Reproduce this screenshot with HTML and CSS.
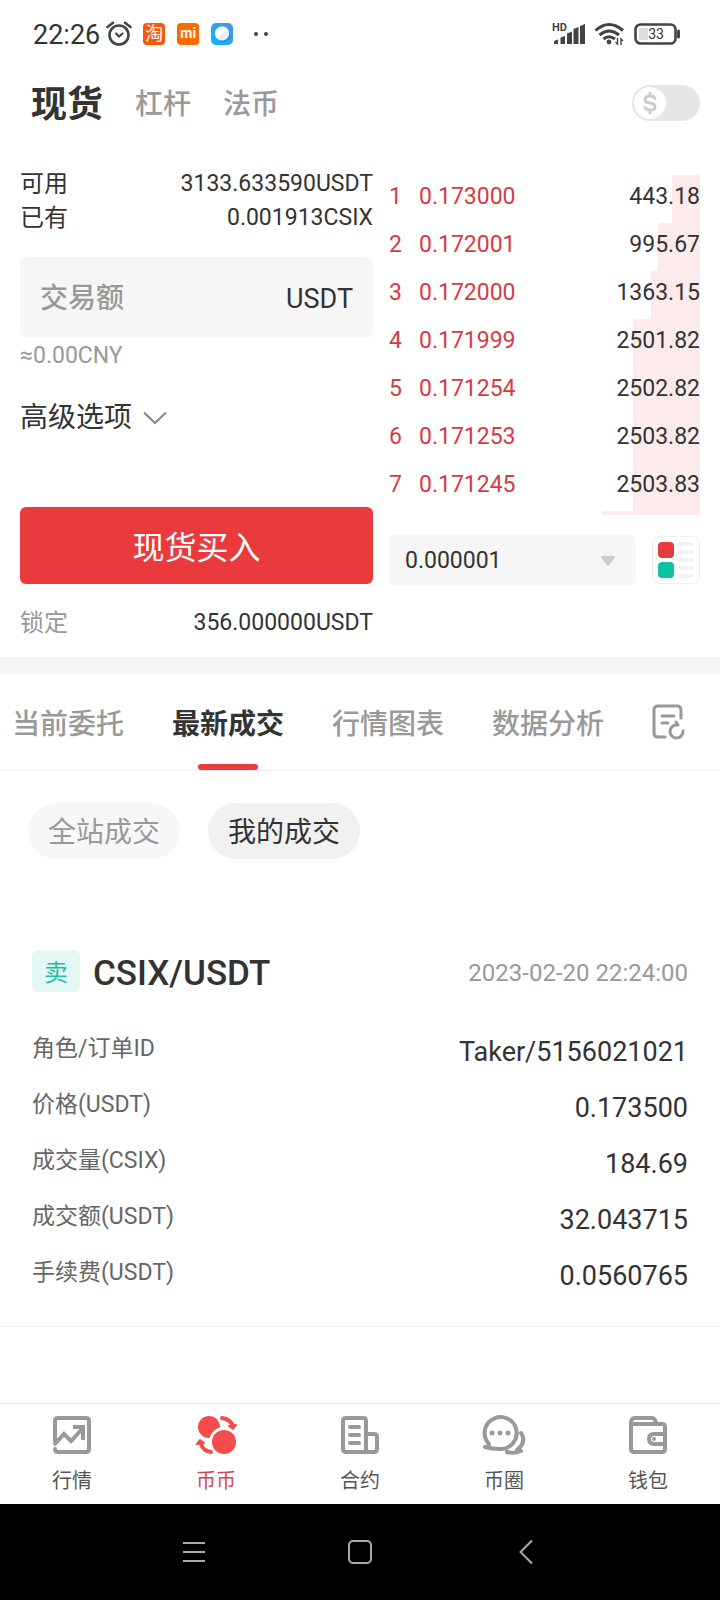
FILE: index.html
```html
<!DOCTYPE html>
<html lang="zh-CN">
<head>
    <meta charset="UTF-8">
    <meta name="viewport" content="width=device-width, initial-scale=1.0">
    <title>现货交易 CSIX/USDT</title>
    <link rel="stylesheet" href="styles.css">
</head>
<body>
    <div class="status-bar">
        <span class="clock">22:26</span>
        <svg class="alarm" width="26" height="26" viewBox="0 0 26 26" fill="none" stroke="#444" stroke-linecap="round">
            <circle cx="13" cy="14" r="9.5" stroke-width="2.6"/>
            <path d="M1.5 6 L7 1.8 M24.5 6 L19 1.8" stroke-width="2.6"/>
            <path d="M10 12.5 L13 15.5 L16.5 12.5" stroke-width="2.2"/>
        </svg>
        <div class="app-icons">
            <span class="app-icon taobao">淘</span>
            <span class="app-icon mi">mi</span>
            <svg width="22" height="22" viewBox="0 0 22 22">
                <defs>
                    <linearGradient id="sky" x1="0" y1="1" x2="1" y2="0">
                        <stop offset="0" stop-color="#12b4f5"/>
                        <stop offset="1" stop-color="#4a90f0"/>
                    </linearGradient>
                </defs>
                <rect width="22" height="22" rx="5" fill="url(#sky)"/>
                <path d="M8 19 L19 9 L19 14 Q16 19 11 19 Z" fill="#0a8de8"/>
                <circle cx="11" cy="10.5" r="7.2" fill="#e8f4fa"/>
                <path d="M6 15.5 A7.2 7.2 0 0 1 16.5 6 Z" fill="#fff"/>
            </svg>
        </div>
        <svg width="16" height="6" viewBox="0 0 16 6" fill="#444">
            <circle cx="3" cy="3" r="2"/>
            <circle cx="13" cy="3" r="2"/>
        </svg>
        <div class="status-right">
            <svg width="34" height="24" viewBox="0 0 34 24" fill="#444">
                <text x="0" y="9" class="hd">HD</text>
                <path d="M2 22 V19.5 Q3 18 6 17.5 V22 Z M8.500 22 V15.5 L13 14 V22 Z M15 22 V11.5 L20 9.5 V22 Z M21.500 22 V7 L26.500 5 V22 Z M28 22 V4 L33 2 V22 Z"/>
            </svg>
            <svg width="32" height="24" viewBox="0 0 32 24" fill="none" stroke="#444" stroke-width="3">
                <path d="M1.5 8.5 Q15 -3.5 29 8.5 M5.5 13 Q15 5 25 13 M9.5 17 Q15 12.5 21 17"/>
                <circle cx="15" cy="20" r="2.4" fill="#444" stroke="none"/>
                <path d="M23.5 16 V22 L21.5 20 M27 23 V17 L29 19" stroke-width="1.4"/>
            </svg>
            <svg width="48" height="22" viewBox="0 0 48 22">
                <rect x="1.5" y="1.5" width="40" height="19" rx="5" fill="#fff" stroke="#444" stroke-width="2.6"/>
                <path d="M5 5 H14 V17 H5 Z" fill="#dcdcdc"/>
                <path d="M44.5 8 V14" stroke="#444" stroke-width="3" stroke-linecap="round"/>
                <text x="22" y="16" text-anchor="middle" class="battery-level">33</text>
            </svg>
        </div>
    </div>

    <header class="market-header">
        <nav class="market-tabs">
            <a href="#spot" class="active">现货</a>
            <a href="#margin">杠杆</a>
            <a href="#fiat">法币</a>
        </nav>
        <label class="currency-switch">
            <input type="checkbox" aria-label="显示法币价格">
            <span class="knob">
                <svg width="14" height="24" viewBox="0 0 14 24" fill="none" stroke="#ccc" stroke-width="3" stroke-linecap="round">
                    <path d="M12 7.5 Q11 5 7 5 Q2 5 2 8.5 Q2 11.5 7 12 Q12 12.5 12 16 Q12 19 7 19 Q3 19 2 16.5 M7 2 V4 M7 20 V22"/>
                </svg>
            </span>
        </label>
    </header>

    <main>
        <section class="trade">
            <form class="order-form">
                <div class="balance"><span>可用</span><span>3133.633590USDT</span></div>
                <div class="balance"><span>已有</span><span>0.001913CSIX</span></div>
                <label class="amount">
                    <input type="text" placeholder="交易额" aria-label="交易额">
                    <span>USDT</span>
                </label>
                <div class="approx">≈0.00CNY</div>
                <button type="button" class="advanced">
                    高级选项
                    <svg width="24" height="14" viewBox="0 0 24 14" fill="none" stroke="#888" stroke-width="2">
                        <path d="M1 1.5 L12 12 L23 1.5"/>
                    </svg>
                </button>
                <button type="button" class="buy">现货买入</button>
                <div class="balance locked"><span>锁定</span><span>356.000000USDT</span></div>
            </form>

            <div class="book">
                <table class="asks">
                    <tbody>
                        <tr style="--depth: 9%"><td>1</td><td>0.173000</td><td>443.18</td></tr>
                        <tr style="--depth: 13.5%"><td>2</td><td>0.172001</td><td>995.67</td></tr>
                        <tr style="--depth: 15.8%"><td>3</td><td>0.172000</td><td>1363.15</td></tr>
                        <tr style="--depth: 21.5%"><td>4</td><td>0.171999</td><td>2501.82</td></tr>
                        <tr style="--depth: 21.5%"><td>5</td><td>0.171254</td><td>2502.82</td></tr>
                        <tr style="--depth: 21.5%"><td>6</td><td>0.171253</td><td>2503.82</td></tr>
                        <tr style="--depth: 21.5%"><td>7</td><td>0.171245</td><td>2503.83</td></tr>
                    </tbody>
                </table>
                <div class="next-depth" style="--depth: 31.5%"></div>
                <div class="book-tools">
                    <div class="precision">
                        <select aria-label="价格精度">
                            <option>0.000001</option>
                        </select>
                        <svg width="16" height="12" viewBox="0 0 16 12" fill="#ccc" stroke="#ccc" stroke-width="2" stroke-linejoin="round">
                            <path d="M2 2 H14 L8 10 Z"/>
                        </svg>
                    </div>
                    <button type="button" class="layout-button" aria-label="盘口布局">
                        <svg width="46" height="46" viewBox="0 0 46 46">
                            <rect x="5" y="5" width="16" height="16" rx="4" fill="#e93b3d"/>
                            <rect x="5" y="25" width="16" height="16" rx="4" fill="#10c0a0"/>
                            <path d="M27 7 H39 M27 15 H39 M27 23 H39 M27 31 H39 M27 39 H39" stroke="#f2f2f2" stroke-width="4" stroke-linecap="round"/>
                        </svg>
                    </button>
                </div>
            </div>
        </section>

        <nav class="section-tabs">
            <a href="#orders">当前委托</a>
            <a href="#deals" class="active">最新成交</a>
            <a href="#chart">行情图表</a>
            <a href="#data">数据分析</a>
            <button type="button" aria-label="历史记录">
                <svg width="34" height="36" viewBox="0 0 34 36" fill="none" stroke="#999" stroke-width="3" stroke-linecap="round" stroke-linejoin="round">
                    <path d="M13 33 H6 Q2 33 2 29 V6 Q2 2 6 2 H25 Q29 2 29 6 V14"/>
                    <path d="M10 12 H22 M10 19 H16"/>
                    <path d="M24 18 L26 21 H24 A6.5 6.5 0 1 0 31 27"/>
                </svg>
            </button>
        </nav>

        <div class="filters">
            <button type="button">全站成交</button>
            <button type="button" class="active">我的成交</button>
        </div>

        <article class="deal">
            <div class="deal-head">
                <span class="side">卖</span>
                <h2>CSIX/USDT</h2>
                <time datetime="2023-02-20T22:24:00">2023-02-20 22:24:00</time>
            </div>
            <dl>
                <div><dt>角色/订单ID</dt><dd>Taker/5156021021</dd></div>
                <div><dt>价格(USDT)</dt><dd>0.173500</dd></div>
                <div><dt>成交量(CSIX)</dt><dd>184.69</dd></div>
                <div><dt>成交额(USDT)</dt><dd>32.043715</dd></div>
                <div><dt>手续费(USDT)</dt><dd>0.0560765</dd></div>
            </dl>
        </article>
    </main>

    <nav class="bottom-nav">
        <a href="#market">
            <svg width="46" height="42" viewBox="0 0 46 42" fill="none" stroke="#999" stroke-width="4" stroke-linecap="round" stroke-linejoin="round">
                <path d="M6 27 V7 Q6 4 9 4 H37 Q40 4 40 7 V35 Q40 38 37 38 H9 Q6 38 6 35"/>
                <path d="M5 31 L15 20 L22 27 L34 14 M24 13 H34 V26" stroke-linecap="butt" stroke-linejoin="miter"/>
            </svg>
            行情
        </a>
        <a href="#coin" class="active">
            <svg width="46" height="42" viewBox="0 0 46 42">
                <circle cx="16" cy="13" r="11" fill="#f54b4d"/>
                <circle cx="31" cy="28" r="15" fill="#fff"/>
                <circle cx="31" cy="28" r="12" fill="#f54b4d"/>
                <path d="M29 4 Q37 5 40 12" fill="none" stroke="#f54b4d" stroke-width="4" stroke-linecap="round"/>
                <path d="M36 12 L43 11 L40 15 Z M4 30 L7 26 L11 29 Z" fill="#f54b4d" stroke="#f54b4d" stroke-width="2" stroke-linejoin="round"/>
                <path d="M8 30 Q10 37 18 38" fill="none" stroke="#f54b4d" stroke-width="4" stroke-linecap="round"/>
            </svg>
            币币
        </a>
        <a href="#contract">
            <svg width="46" height="42" viewBox="0 0 46 42" fill="none" stroke="#999" stroke-width="4" stroke-linecap="round" stroke-linejoin="round">
                <path d="M29 38 H9 Q6 38 6 35 V7 Q6 4 9 4 H26 Q29 4 29 7 Z"/>
                <path d="M29 20 H37 Q40 20 40 23 V35 Q40 38 37 38 H29"/>
                <path d="M13 13 H22 M13 21 H22 M13 29 H22"/>
            </svg>
            合约
        </a>
        <a href="#community">
            <svg width="46" height="42" viewBox="0 0 46 42" fill="none" stroke="#999" stroke-width="4" stroke-linecap="round" stroke-linejoin="round">
                <path d="M4 33 Q8 33 8 30 A16 16 0 1 1 19 35 Q11 35 4 33"/>
                <path d="M40 19 Q46 28 36 36 L40 37 Q33 40 26 38"/>
                <g fill="#999" stroke="none">
                    <circle cx="11" cy="19" r="2.5"/>
                    <circle cx="19" cy="19" r="2.5"/>
                    <circle cx="27" cy="19" r="2.5"/>
                </g>
            </svg>
            币圈
        </a>
        <a href="#wallet">
            <svg width="46" height="42" viewBox="0 0 46 42" fill="none" stroke="#999" stroke-width="4" stroke-linecap="round" stroke-linejoin="round">
                <path d="M6 9 V35 Q6 38 9 38 H37 Q40 38 40 35 V13 Q40 10 37 10 H6 Q6 4 10 4 H27 Q30 4 31 9"/>
                <path d="M40 20 H29 Q24 20 24 25 Q24 30 29 30 H40"/>
                <circle cx="29" cy="25" r="2" fill="#999" stroke="none"/>
            </svg>
            钱包
        </a>
    </nav>

    <div class="system-nav">
        <button type="button" aria-label="最近任务">
            <svg width="26" height="26" viewBox="0 0 26 26" fill="none" stroke="#aaa" stroke-width="2">
                <path d="M2 4 H24 M2 13 H24 M2 22 H24"/>
            </svg>
        </button>
        <button type="button" aria-label="主页">
            <svg width="26" height="26" viewBox="0 0 26 26" fill="none" stroke="#aaa" stroke-width="2">
                <rect x="2" y="2" width="22" height="22" rx="4"/>
            </svg>
        </button>
        <button type="button" aria-label="返回">
            <svg width="26" height="26" viewBox="0 0 26 26" fill="none" stroke="#aaa" stroke-width="2">
                <path d="M19 1.5 L7.5 13 L19 24.5"/>
            </svg>
        </button>
    </div>
</body>
</html>
```

FILE: styles.css
```css
* {
    box-sizing: border-box;
}
body {
    display: flex;
    flex-direction: column;
    min-height: 100vh;
    margin: 0;
    background-color: #fff;
    color: #333;
    font-family: Roboto, "Noto Sans CJK SC", sans-serif;
    font-size: 23px;
    line-height: 34px;
}
a {
    color: inherit;
    text-decoration: none;
}
button {
    padding: 0;
    border: 0;
    background: none;
    color: inherit;
    font: inherit;
    cursor: pointer;
}
svg {
    display: block;
    flex: none;
}

/* phone status bar */
.status-bar {
    display: flex;
    align-items: center;
    height: 68px;
    padding: 0 38px 0 33px;
}
.clock {
    margin-right: 6px;
    padding-top: 2px;
    font-size: 27px;
}
.app-icons {
    display: flex;
    gap: 12px;
    margin: 0 20px 0 11px;
}
.app-icon {
    width: 22px;
    height: 22px;
    border-radius: 4px;
    background-color: #ff6a00;
    color: #fff;
    text-align: center;
    line-height: 22px;
}
.taobao {
    background-color: #f55a0a;
    font-size: 18px;
}
.mi {
    font-size: 14px;
    font-weight: 700;
    line-height: 20px;
}
.status-right {
    display: flex;
    align-items: center;
    gap: 8px;
    margin-left: auto;
}
.hd {
    font-size: 11px;
    font-weight: 700;
}
.battery-level {
    fill: #333;
    font-size: 14px;
}

.market-header {
    display: flex;
    align-items: center;
    justify-content: space-between;
    height: 70px;
    padding: 0 20px 0 31px;
}
.market-tabs {
    display: flex;
    align-items: center;
    gap: 32px;
    padding-top: 3px;
    color: #999;
    font-size: 28px;
    font-weight: 500;
}
.market-tabs .active {
    color: #333;
    font-size: 36px;
    font-weight: 700;
}
.currency-switch {
    display: flex;
    width: 68px;
    padding: 2px;
    border-radius: 18px;
    background-color: #e6e6e6;
}
.currency-switch input {
    position: absolute;
    opacity: 0;
}
.knob {
    display: flex;
    align-items: center;
    justify-content: center;
    width: 32px;
    height: 32px;
    border-radius: 50%;
    background-color: #fff;
}

/* order form and order book */
.trade {
    display: grid;
    grid-template-columns: minmax(0, 353fr) minmax(0, 311fr);
    gap: 16px;
    padding: 29px 20px 17px;
}
.order-form {
    display: flex;
    flex-direction: column;
}
.balance {
    display: flex;
    justify-content: space-between;
}
.balance span:first-child {
    font-size: 24px;
}
.amount {
    display: flex;
    align-items: center;
    height: 80px;
    margin-top: 22px;
    padding: 4px 20px 0;
    border-radius: 6px;
    background-color: #f6f6f6;
    font-size: 27px;
}
.amount input {
    flex: 1;
    min-width: 0;
    padding: 0;
    border: 0;
    background: none;
    font: inherit;
    font-size: 28px;
    font-weight: 500;
}
.amount input::placeholder {
    color: #999;
}
.approx {
    margin-top: 2px;
    color: #999;
}
.advanced {
    display: flex;
    align-items: center;
    gap: 11px;
    margin-top: 25px;
    font-size: 28px;
    line-height: 40px;
}
.buy {
    height: 77px;
    margin-top: 69px;
    padding-top: 5px;
    border-radius: 6px;
    background-color: #e93b3d;
    color: #fff;
    font-size: 32px;
}
.locked {
    margin-top: 22px;
}
.locked span:first-child {
    color: #999;
}
.book {
    padding-top: 8px;
}
.asks {
    width: 100%;
    border-collapse: collapse;
}
.asks tr,
.next-depth {
    background: linear-gradient(#fdeaea, #fdeaea) right / var(--depth) 100% no-repeat;
}
.asks td {
    height: 48px;
    padding: 0 0 4px;
    color: #d43c46;
}
.asks td:first-child {
    width: 30px;
}
.asks td:last-child {
    color: #333;
    text-align: right;
}
.next-depth {
    height: 4px;
}
.book-tools {
    display: flex;
    align-items: center;
    gap: 16px;
    margin-top: 20px;
}
.precision {
    display: flex;
    flex: 1;
    align-items: center;
    height: 50px;
    padding: 2px 20px 0 16px;
    border-radius: 6px;
    background-color: #f6f6f6;
}
.precision select {
    flex: 1;
    padding: 0;
    border: 0;
    background: none;
    color: inherit;
    font: inherit;
    appearance: none;
}
.layout-button {
    border: 1px solid #eee;
    border-radius: 8px;
}

.section-tabs {
    display: flex;
    align-items: center;
    gap: 48px;
    padding-left: 12px;
    border-top: 17px solid #f6f6f6;
    border-bottom: 1px solid #eee;
    color: #999;
    font-size: 28px;
    font-weight: 500;
    white-space: nowrap;
}
.section-tabs a {
    display: flex;
    flex-direction: column;
    align-items: center;
    padding-top: 31px;
    line-height: 40px;
}
.section-tabs a::after {
    width: 60px;
    height: 6px;
    margin-top: 19px;
    border-radius: 3px;
    content: "";
}
.section-tabs .active {
    color: #333;
    font-weight: 700;
}
.section-tabs .active::after {
    background-color: #e93b3d;
}

.filters {
    display: flex;
    gap: 28px;
    padding: 32px 28px;
}
.filters button {
    height: 56px;
    padding: 4px 20px 0;
    border-radius: 28px;
    background-color: #f7f7f7;
    color: #999;
    font-size: 28px;
}
.filters .active {
    background-color: #f1f1f1;
    color: #333;
}

/* single deal record */
.deal {
    padding: 56px 32px 17px;
    border-bottom: 1px solid #eee;
}
.deal-head {
    display: flex;
    align-items: center;
    margin-bottom: 34px;
}
.side {
    width: 48px;
    height: 42px;
    border-radius: 6px;
    background-color: #e5f7f4;
    color: #1dbfa3;
    font-size: 24px;
    text-align: center;
    line-height: 46px;
}
.deal-head h2 {
    margin: 0 auto 0 13px;
    padding-top: 6px;
    font-size: 35px;
    font-weight: 500;
    line-height: 42px;
}
.deal-head time {
    padding-top: 3px;
    color: #999;
    font-size: 24px;
}
.deal dl {
    margin: 0;
}
.deal dl div {
    display: flex;
    justify-content: space-between;
    height: 56px;
}
.deal dt {
    padding-top: 3px;
    color: #666;
}
.deal dd {
    margin: 0;
    padding-top: 6px;
    font-size: 27px;
}

.bottom-nav {
    display: flex;
    margin-top: auto;
    border-top: 1px solid #e8e8e8;
    color: #555;
    font-size: 20px;
    line-height: 28px;
}
.bottom-nav a {
    display: flex;
    flex: 1;
    flex-direction: column;
    align-items: center;
    gap: 11px;
    padding: 10px 0 9px;
}
.bottom-nav .active {
    color: #d4484c;
}
.system-nav {
    display: flex;
    align-items: center;
    justify-content: center;
    gap: 140px;
    height: 96px;
    background-color: #000;
}
```
